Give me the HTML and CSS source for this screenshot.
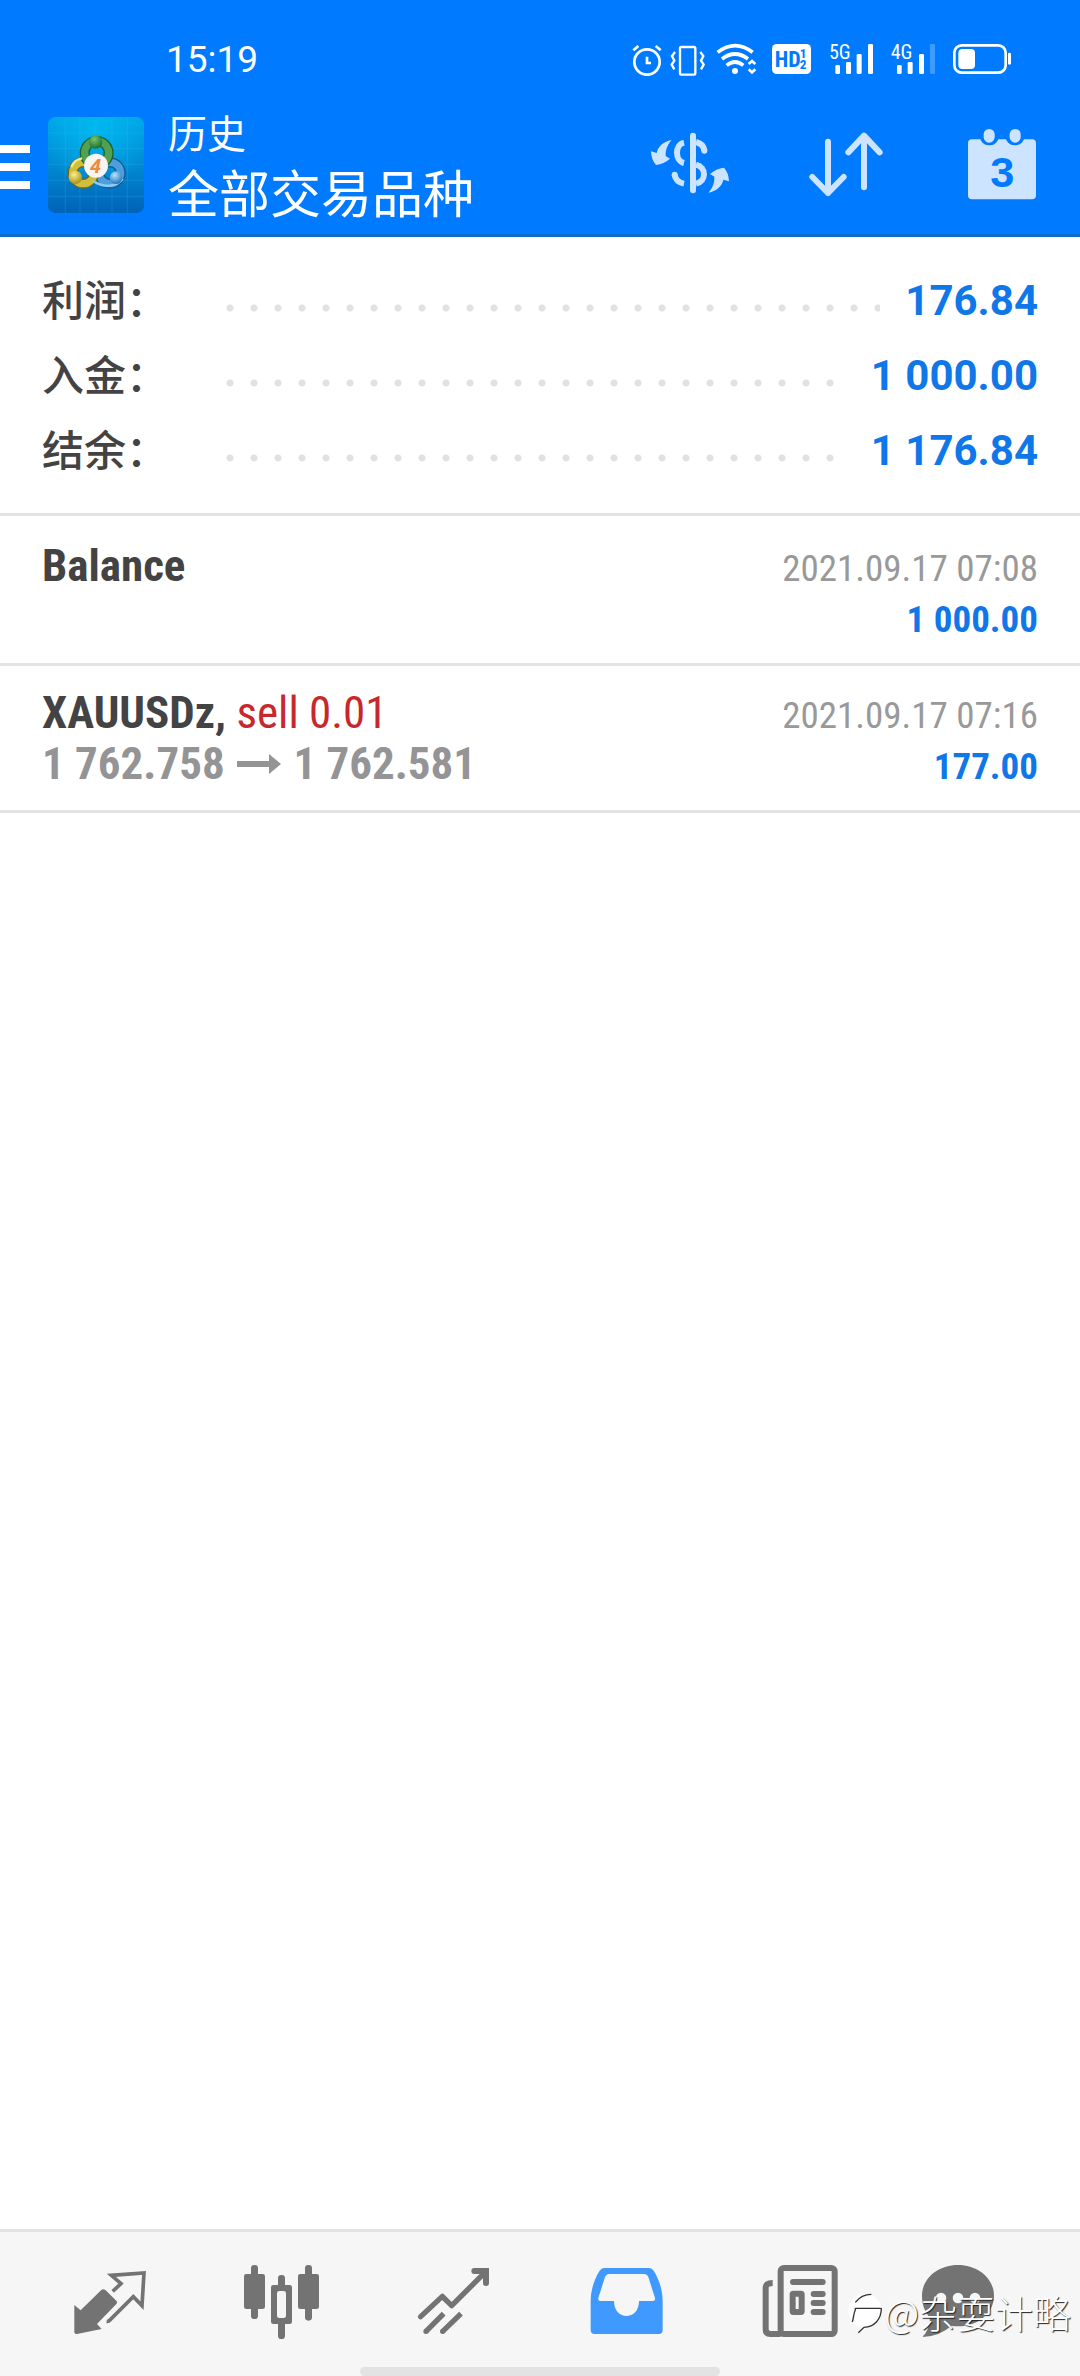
FILE: index.html
```html
<!DOCTYPE html>
<html lang="zh-CN">
<head>
<meta charset="utf-8">
<meta name="viewport" content="width=device-width, initial-scale=1">
<title>历史</title>
<link rel="stylesheet" href="styles.css">
</head>
<body>
<header class="header">
  <div class="status">
    <time class="status-time">15:19</time>
    <div class="status-icons">
      <svg class="i-alarm" viewBox="84 60 114 120" fill="none" stroke="currentColor" stroke-width="8" stroke-linecap="round"><circle cx="141" cy="126" r="38"/><path d="M141 110v19h12M100 91l15-13M167 78l15 13" stroke-linecap="butt"/></svg>
      <svg class="i-vibrate" viewBox="198 60 132 120" fill="none" stroke="currentColor" stroke-width="7"><rect x="240" y="81" width="46" height="83" rx="4"/><path d="M225 96l-9 12 7 14-8 12 8 14M301 96l9 12-7 14 8 12-8 14"/></svg>
      <svg class="i-wifi" viewBox="330 60 162 120" fill="none" stroke="currentColor" stroke-width="11"><path d="M353 97q52-40 105 0M366 117q39-30 78 0M380 136q25-20 50 0"/><circle cx="405" cy="153" r="9" fill="currentColor" stroke="none"/><path d="M446 132l10-9 10 9M446 148l10 9 10-9" stroke-width="8"/></svg>
      <svg class="i-hd" viewBox="492 60 168 120"><rect x="516" y="72" width="117" height="90" rx="14" fill="currentColor"/><g class="cut"><text x="524" y="141" font-size="66">HD</text><text x="599" y="113" font-size="40">1</text><text x="599" y="147" font-size="40">2</text></g></svg>
      <svg class="i-signal" viewBox="0 60 186 120" fill="currentColor"><text x="27" y="117" font-size="60">5G</text><rect x="46" y="135" width="14" height="27" rx="4"/><rect x="78" y="126" width="15" height="36" rx="4"/><rect x="110" y="102" width="15" height="60" rx="4"/><rect x="144" y="72" width="15" height="90" rx="4"/></svg>
      <svg class="i-signal" viewBox="186 60 186 120" fill="currentColor"><text x="212" y="117" font-size="60">4G</text><rect x="231" y="135" width="14" height="27" rx="4"/><rect x="263" y="126" width="15" height="36" rx="4"/><rect x="297" y="102" width="15" height="60" rx="4"/><rect x="330" y="72" width="15" height="90" rx="4" opacity=".25"/></svg>
      <svg class="i-battery" viewBox="372 60 228 120" fill="currentColor"><rect x="403" y="76" width="154" height="82" rx="22" fill="none" stroke="currentColor" stroke-width="8"/><rect x="415" y="87" width="50" height="60" rx="12"/><rect x="564" y="98" width="9" height="36" rx="4"/></svg>
    </div>
  </div>
  <div class="appbar">
    <button class="menu" aria-label="菜单"><i></i><i></i><i></i></button>
    <svg class="logo" viewBox="12 12 288 288">
      <defs>
        <linearGradient id="bg" x1="0" y1="0" x2="0" y2="1"><stop offset="0" stop-color="#00a3e4"/><stop offset=".5" stop-color="#008ad2"/><stop offset="1" stop-color="#0062b8"/></linearGradient>
        <radialGradient id="glow" cx=".5" cy=".1" r=".6"><stop offset="0" stop-color="#00b8f0"/><stop offset="1" stop-color="#00b8f0" stop-opacity="0"/></radialGradient>
        <radialGradient id="gb" cx=".4" cy=".3" r=".7"><stop offset="0" stop-color="#7cc46c"/><stop offset="1" stop-color="#1a7032"/></radialGradient>
        <radialGradient id="yb" cx=".4" cy=".3" r=".7"><stop offset="0" stop-color="#fdf08a"/><stop offset="1" stop-color="#a8921a"/></radialGradient>
        <radialGradient id="bb" cx=".4" cy=".3" r=".7"><stop offset="0" stop-color="#b5e4ff"/><stop offset="1" stop-color="#2478be"/></radialGradient>
      </defs>
      <rect x="12" y="12" width="288" height="288" rx="22" fill="url(#bg)"/>
      <rect x="12" y="12" width="288" height="288" rx="22" fill="url(#glow)"/>
      <path d="M64 12v288M108 12v288M156 12v288M204 12v288M250 12v288M12 60h288M12 106h288M12 154h288M12 202h288M12 250h288" stroke="#5cc4f0" stroke-opacity=".18" stroke-width="3"/>
      <g fill="none">
        <circle cx="198" cy="180" r="32" stroke="#17568c" stroke-width="30"/><circle cx="198" cy="180" r="32" stroke="#4a9fdc" stroke-width="22"/>
        <circle cx="118" cy="180" r="32" stroke="#6d6a12" stroke-width="30"/><circle cx="118" cy="180" r="32" stroke="#d0be3c" stroke-width="22"/>
        <circle cx="158" cy="120" r="36" stroke="#1d6030" stroke-width="30"/><circle cx="158" cy="120" r="36" stroke="#4fa251" stroke-width="22"/>
        <path d="M148 204q22 16 50 14 24-3 38-20" stroke="#8ccaf2" stroke-width="8"/>
        <path d="M82 162q8-22 32-26" stroke="#f4ea8c" stroke-width="7"/>
      </g>
      <circle cx="155" cy="87" r="20" fill="url(#gb)"/><circle cx="94" cy="193" r="20" fill="url(#yb)"/><circle cx="216" cy="194" r="19" fill="url(#bb)"/>
      <circle cx="156" cy="158" r="36" fill="#f8f4f0"/>
      <text class="logo-four" x="155" y="179" font-size="58" text-anchor="middle">4</text>
    </svg>
    <div class="titles">
      <p class="subtitle">历史</p>
      <h1 class="title">全部交易品种</h1>
    </div>
    <div class="actions">
      <button aria-label="货币">
        <svg viewBox="66 21 288 288" fill="currentColor"><rect x="210" y="68" width="18" height="182" rx="9"/><g fill="none" stroke="currentColor" stroke-width="18"><path d="M192 98c-28 6-28 55 0 61M228 96c16 4 24 14 25 26" /><path d="M228 164c32 8 32 50 0 57"/><path d="M164 194c2 14 12 24 28 27"/><path d="M253 121v1M164 194v1" stroke-linecap="round"/></g><path id="swap" d="M155 90C128 96 114 110 110 129L93 124Q94 150 108 165Q132 162 150 146L137 138C136 118 144 102 155 90Z"/><use href="#swap" transform="rotate(180 210 169)"/></svg>
      </button>
      <button aria-label="排序">
        <svg viewBox="534 21 288 288" fill="none" stroke="currentColor" stroke-width="18" stroke-linecap="round" stroke-linejoin="round"><path d="M624 95v154M577 201l47 48 47-48M732 232V77M685 127l47-50 47 50"/></svg>
      </button>
      <button aria-label="日期">
        <svg viewBox="1002 21 288 288" fill="currentColor"><rect x="1044" y="88" width="204" height="180" rx="12"/><g class="cut"><rect x="1080" y="50" width="56" height="56" rx="26"/><rect x="1157" y="50" width="56" height="56" rx="26"/><text class="day" x="1147" y="230" font-size="130" text-anchor="middle">3</text></g><rect x="1091" y="57" width="33" height="41" rx="16"/><rect x="1169" y="57" width="33" height="41" rx="16"/></svg>
      </button>
    </div>
  </div>
</header>

<main class="main">
  <dl class="summary">
    <div class="sum-row"><dt>利润：</dt><dd class="leader"></dd><dd class="sum">176.84</dd></div>
    <div class="sum-row"><dt>入金：</dt><dd class="leader"></dd><dd class="sum">1 000.00</dd></div>
    <div class="sum-row"><dt>结余：</dt><dd class="leader"></dd><dd class="sum">1 176.84</dd></div>
  </dl>
  <ul class="deals">
    <li class="deal">
      <div class="line"><strong class="name">Balance</strong><time class="date">2021.09.17 07:08</time></div>
      <div class="line"><b class="amount">1 000.00</b></div>
    </li>
    <li class="deal">
      <div class="line"><span class="name"><strong>XAUUSDz,</strong> <span class="sell">sell 0.01</span></span><time class="date">2021.09.17 07:16</time></div>
      <div class="line"><span class="prices">1 762.758 <svg class="arrow" viewBox="0 0 44 20" fill="currentColor"><path d="M0 7h32V0l12 10-12 10v-7H0z"/></svg> 1 762.581</span><b class="amount">177.00</b></div>
    </li>
  </ul>
</main>

<footer class="footer">
  <nav class="tabs">
    <a href="#quotes" aria-label="报价"><svg viewBox="66 108 288 288" fill="currentColor"><path d="M103 255l19 16 61-60q7-7 14 0l32 31q5 5 0 10l-58 60 14 15-74 15q-8 0-8-7z"/><path d="M218 214l25-23-29-25 98-7-6 98-26-27-70 70q-4 5-10 4" fill="none" stroke="currentColor" stroke-width="11"/></svg></a>
    <a href="#charts" aria-label="图表"><svg viewBox="582 108 288 288" fill="currentColor"><rect x="612" y="162" width="63" height="105" rx="7"/><rect x="633" y="135" width="21" height="162" rx="10"/><rect x="774" y="162" width="63" height="105" rx="7"/><rect x="795" y="135" width="21" height="167" rx="10"/><rect x="714" y="165" width="21" height="40" rx="10"/><rect x="714" y="300" width="21" height="57" rx="10"/><path fill-rule="evenodd" d="M700 195h49q7 0 7 7v103q0 7-7 7h-49q-7 0-7-7V202q0-7 7-7zM718 213q-7 0-7 7v67q0 7 7 7h13q7 0 7-7v-67q0-7-7-7z"/></svg></a>
    <a href="#trade" aria-label="交易"><svg viewBox="1098 108 288 288" fill="none" stroke="currentColor" stroke-width="16" stroke-linejoin="round"><path d="M1142 290l65-61 28 28 100-100" stroke-linecap="round"/><path d="M1303 153h35v36" stroke-width="18" stroke-linecap="round" stroke-linejoin="miter"/><path d="M1158 334l53-53M1208 334l55-53"/><path d="M1158 334h.1M1208 334h.1" stroke-linecap="round"/></svg></a>
    <a href="#history" class="active" aria-current="page" aria-label="历史"><svg viewBox="54 108 288 288" fill="currentColor"><path fill-rule="evenodd" d="M132 144h136q8 0 13 8c18 28 27 61 27 93v85q0 12-12 12H104q-12 0-12-12v-85c0-32 9-65 27-93q5-8 13-8zM148 162q-9 0-13 9l-20 63q-2 9 7 9h40c0 60 75 60 75 0h41q9 0 7-9l-20-63q-4-9-13-9z"/></svg></a>
    <a href="#news" aria-label="新闻"><svg viewBox="570 108 288 288" fill="none" stroke="currentColor" stroke-width="18"><rect x="662" y="144" width="162" height="198" rx="10"/><path d="M638 189q-21 0-21 14v125q0 14 14 14h31"/><rect x="698" y="221" width="27" height="55" rx="2"/><path d="M699 186h89M761 222h27M761 249h27M761 276h27" stroke-linecap="round"/></svg></a>
    <a href="#chat" aria-label="消息"><svg viewBox="1086 108 288 288" fill="currentColor"><path d="M1194 135c60 0 108 40 108 92s-48 92-108 92q-10 0-20-2-34 32-88 34 22-18 24-58c-16-18-24-40-24-66 0-52 48-92 108-92z"/><g fill="#f6f6f6"><circle cx="1143" cy="234" r="16"/><circle cx="1194" cy="234" r="16"/><circle cx="1245" cy="234" r="16"/></g></svg></a>
  </nav>
  <div class="watermark">
    <svg viewBox="846 228 108 132"><circle cx="903" cy="290" r="50" fill="#fff"/><path d="M865 324c4-12 3-24 10-40M874 265q18-24 48-24M872 283h78M952 282c0 36-22 56-52 58l-17 16" fill="none" stroke="#333" stroke-width="4"/></svg>
    <span>@杂耍计略</span>
  </div>
  <div class="home"></div>
</footer>
</body>
</html>
```
FILE: styles.css
```css
:root {
  --blue: #007aff;
  --divider: #e3e3e3;
  --condensed: "Roboto Condensed", Roboto, sans-serif;
  --cjk: "Noto Sans CJK SC", sans-serif;
}

* { box-sizing: border-box; margin: 0; padding: 0; }

body {
  display: flex;
  flex-direction: column;
  min-height: 100vh;
  background: #fff;
  color: #434343;
  font-family: Roboto, var(--cjk);
}

button { background: none; border: 0; color: inherit; font: inherit; }
svg { display: block; }
ul { list-style: none; }

/* Header */
.header { background: var(--blue); color: #fff; border-bottom: 3px solid #0d6cc8; }

.status {
  display: flex;
  align-items: center;
  justify-content: space-between;
  height: 80px;
  padding: 40px 60px 0 166px;
}
.status-time { font-size: 37px; line-height: 40px; }
.status-icons { display: flex; }
.status-icons svg { height: 40px; }
.status-icons text { font-family: var(--condensed); }
.i-alarm { width: 38px; }
.i-vibrate { width: 44px; }
.i-wifi { width: 54px; }
.i-hd { width: 56px; }
.i-signal { width: 62px; }
.i-battery { width: 76px; }
.cut { fill: var(--blue); font-weight: 700; }

.appbar { display: flex; align-items: center; height: 154px; padding-top: 16px; }
.menu { display: flex; flex-direction: column; gap: 10px; width: 30px; padding-top: 4px; }
.menu i { height: 8px; background: #fff; }
.logo { width: 96px; height: 96px; margin: 0 24px 0 18px; }
.logo-four { font-family: "Open Sans", sans-serif; font-style: italic; font-weight: 700; fill: #f08a3c; }
.titles { flex: 1; padding-bottom: 4px; font-family: var(--cjk); }
.subtitle { font-size: 39px; line-height: 56px; }
.title { font-size: 51px; line-height: 64px; font-weight: 400; }
.actions { display: flex; color: #cce4ff; }
.actions button { display: flex; justify-content: center; width: 156px; }
.actions svg { width: 96px; height: 96px; }
.day { font-family: "Liberation Sans", sans-serif; }

/* Account summary */
.main { flex: 1; }
.summary { padding: 26px 42px 25px; border-bottom: 3px solid var(--divider); }
.sum-row { display: flex; align-items: center; height: 75px; }
.sum-row dt { width: 176px; padding-bottom: 5px; font: 500 42px/60px var(--cjk); }
.leader {
  flex: 1;
  height: 22px;
  margin-right: 25px;
  background: radial-gradient(circle, #e1e1e1 3px, transparent 4px) left bottom / 24px 8px repeat-x;
}
.sum { color: #1077e8; font-size: 42px; font-weight: 700; }

/* Deals */
.deals { border-bottom: 3px solid var(--divider); font-family: var(--condensed); }
.deal { height: 147px; padding: 21px 42px 0; border-top: 3px solid var(--divider); }
.deal:first-child { border-top-color: transparent; }
.line { display: flex; align-items: baseline; height: 51px; font-size: 45px; line-height: 51px; }
.line::before { content: "\200b"; width: 0; }
.sell { color: #c8282c; }
.prices { color: #949496; font-weight: 700; }
.arrow { display: inline-block; width: 44px; height: 20px; margin: 0 2px 5px; }
.date, .amount { margin-left: auto; font-size: 37px; line-height: 37px; }
.date { color: #999; }
.amount { color: #1077e8; }

/* Bottom bar */
.footer {
  position: relative;
  height: 147px;
  background: #f6f6f6;
  border-top: 3px solid var(--divider);
  color: #737373;
}
.tabs { display: flex; padding: 24px 24px 0; }
.tabs a { display: flex; flex: 1; justify-content: center; color: inherit; }
.tabs .active { color: #4099ff; }
.tabs svg { width: 96px; height: 96px; }
.home {
  position: absolute;
  left: 33.33%;
  right: 33.33%;
  bottom: 0;
  height: 9px;
  border-radius: 5px;
  background: var(--divider);
}
.watermark {
  position: absolute;
  right: 9px;
  bottom: 37px;
  display: flex;
  align-items: center;
  gap: 2px;
  color: #fff;
  font: 300 38px/54px var(--cjk);
  text-shadow: 1px 1px 1px #222;
}
.watermark svg { width: 36px; height: 44px; }
```
